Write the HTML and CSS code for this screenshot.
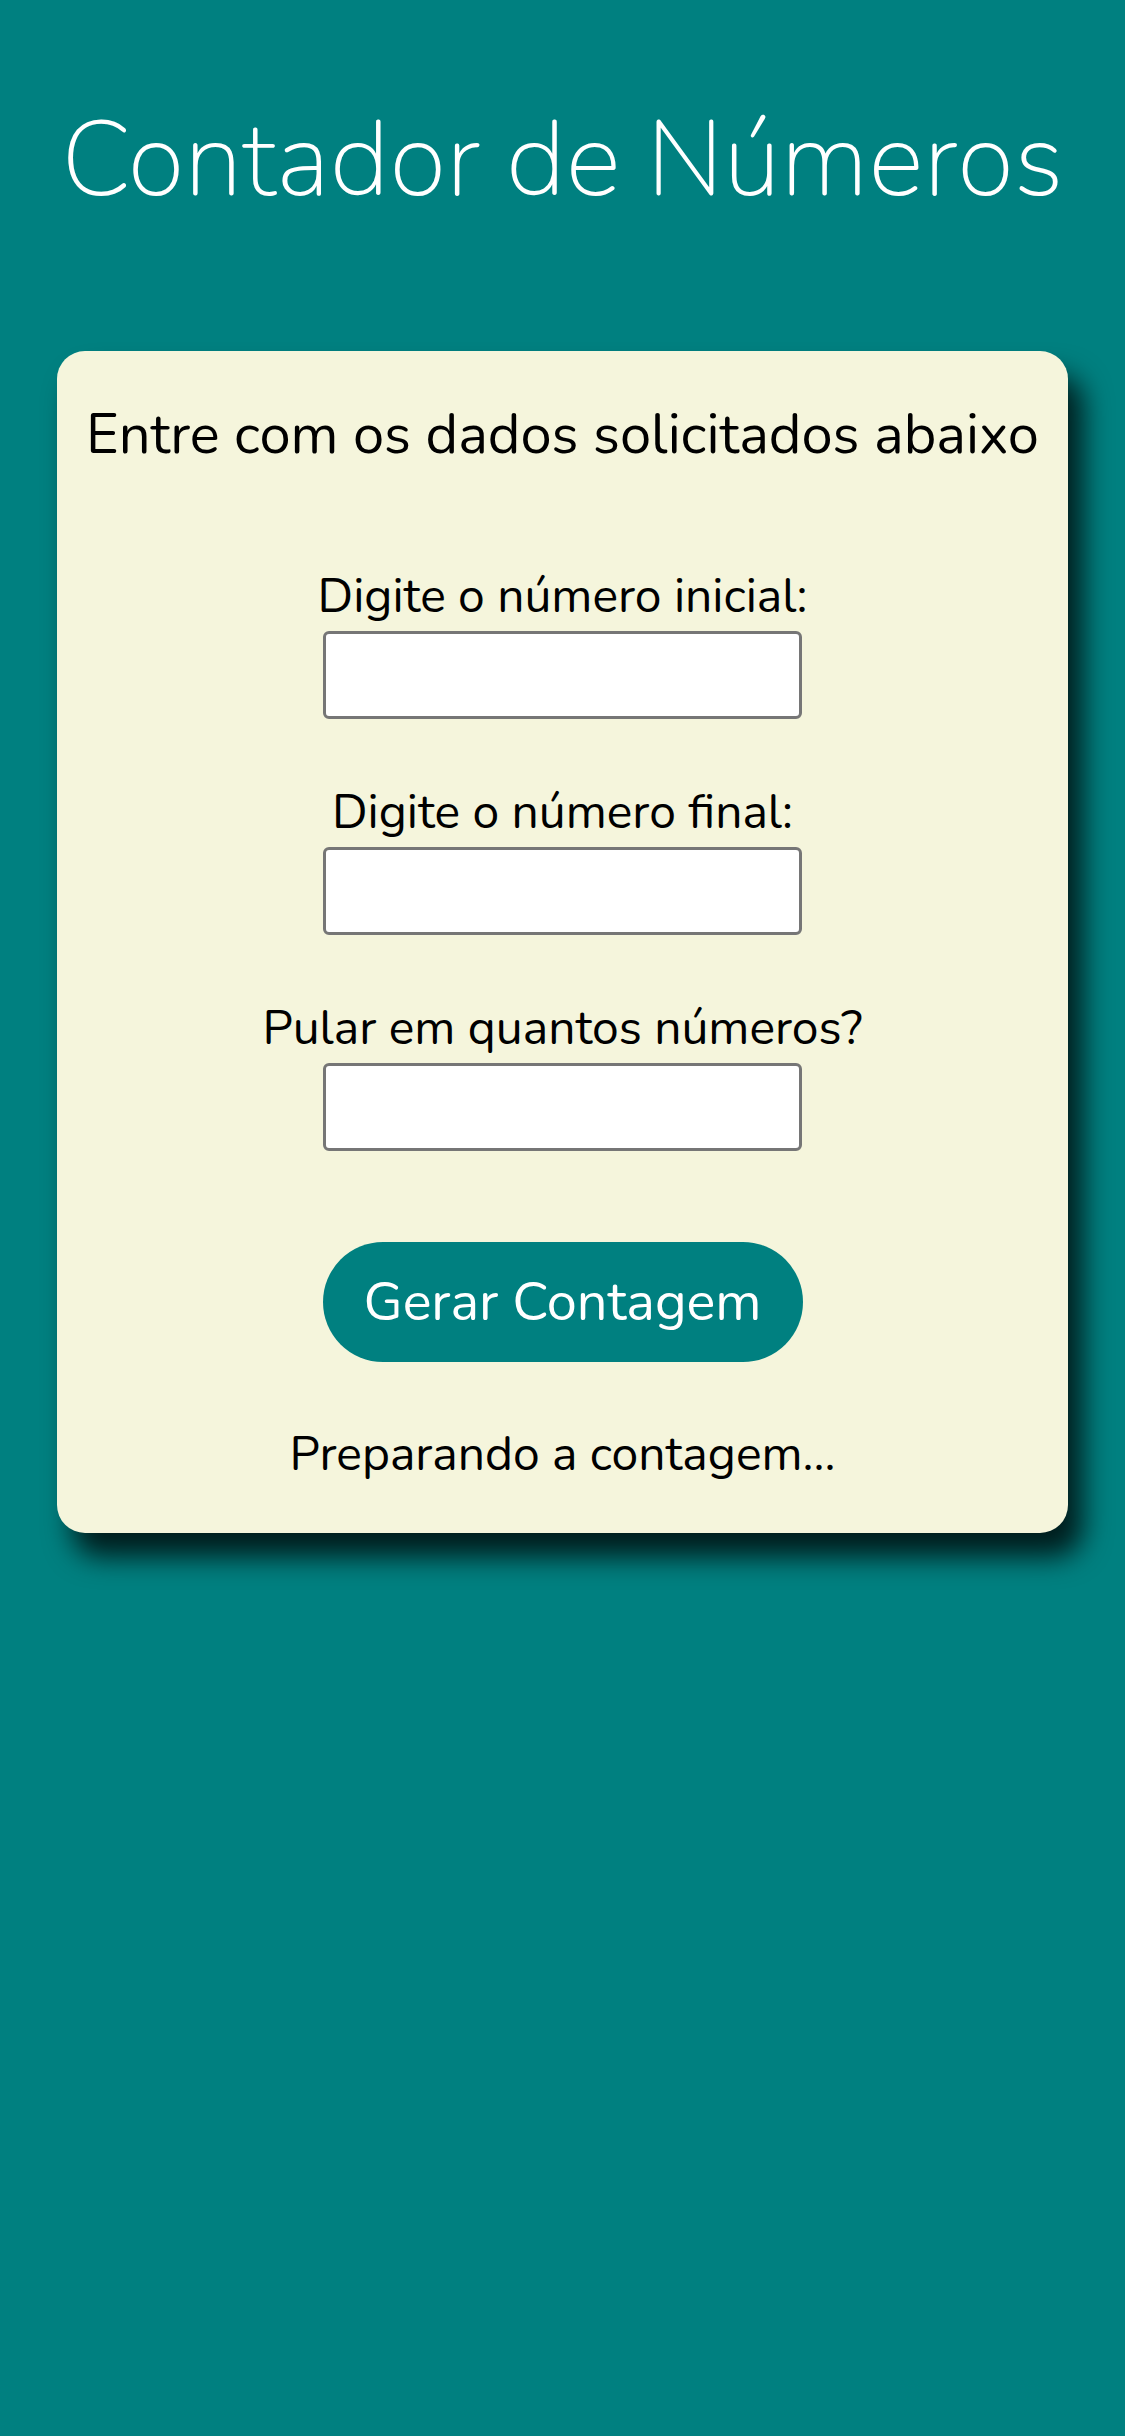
FILE: index.html
```html
<!DOCTYPE html>
<html lang="pt-BR">
<head>
<meta charset="utf-8">
<title>Contador de Números</title>
<link rel="stylesheet" href="styles.css">
</head>
<body>
<header class="page-header">
  <h1 class="title">Contador de Números</h1>
</header>
<main class="card">
  <p class="intro">Entre com os dados solicitados abaixo</p>
  <form class="form">
    <div class="field">
      <label class="field-label" for="inicio">Digite o número inicial:</label>
      <input class="field-input" id="inicio" type="number">
    </div>
    <div class="field">
      <label class="field-label" for="fim">Digite o número final:</label>
      <input class="field-input" id="fim" type="number">
    </div>
    <div class="field">
      <label class="field-label" for="passo">Pular em quantos números?</label>
      <input class="field-input" id="passo" type="number">
    </div>
    <button class="btn" type="button">Gerar Contagem</button>
  </form>
  <p class="status">Preparando a contagem...</p>
</main>
</body>
</html>
```
FILE: styles.css
```css
html, body {
  margin: 0;
  padding: 0;
}

body {
  background: #008080;
  font-family: Nunito, Lato, "Open Sans", sans-serif;
  color: #000;
  min-height: 2436px;
}

.page-header {
  padding-top: 97px;
}

.title {
  margin: 0;
  color: #fff;
  font-size: 105px;
  font-weight: 200;
  line-height: 127px;
  text-align: center;
}

.card {
  margin: 127px 57px 0;
  padding: 51px 0 54px;
  background: #f5f5dc;
  border-radius: 28px;
  box-shadow: 15px 24px 28px rgba(0, 0, 0, 0.78);
  text-align: center;
}

.intro {
  margin: 0;
  font-size: 56px;
  line-height: 65px;
}

.form {
  margin-top: 104px;
  display: flex;
  flex-direction: column;
  align-items: center;
  gap: 68px;
}

.field {
  display: flex;
  flex-direction: column;
  align-items: center;
  gap: 10px;
}

.field-label {
  font-size: 48px;
  line-height: 50px;
}

.field-input {
  box-sizing: border-box;
  width: 479px;
  height: 88px;
  margin: 0;
  border: 3px solid #767676;
  border-radius: 6px;
  background: #fff;
  font-size: 40px;
  font-family: inherit;
}

.btn {
  margin-top: 23px;
  width: 480px;
  height: 120px;
  border: none;
  border-radius: 60px;
  background: #008080;
  color: #fff;
  font-family: inherit;
  font-size: 54px;
  font-weight: 400;
}

.status {
  margin: 67px 0 0;
  font-size: 48px;
  line-height: 50px;
}
```
